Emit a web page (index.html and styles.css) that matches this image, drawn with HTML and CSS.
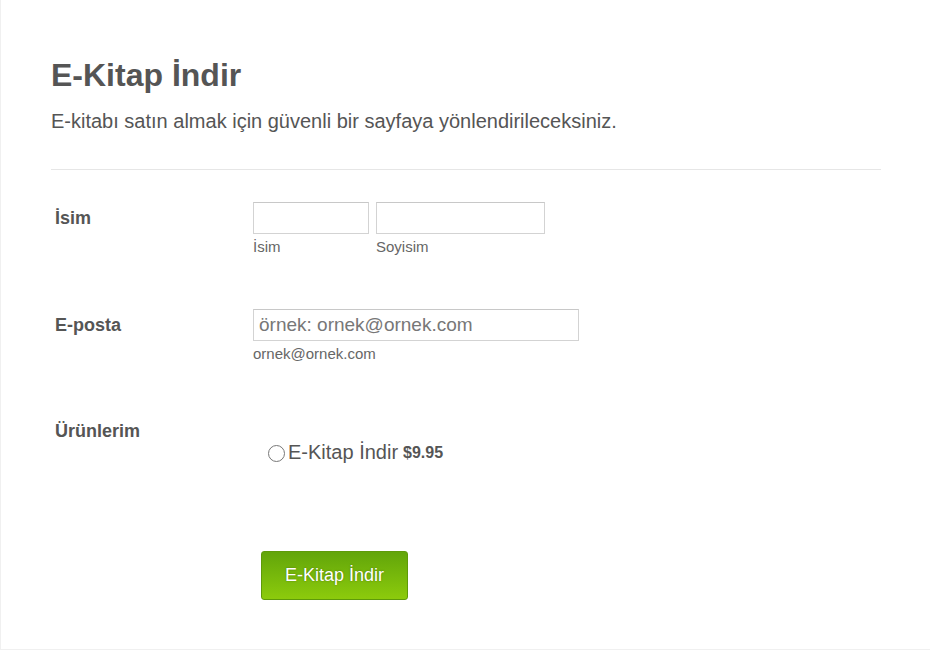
FILE: index.html
```html
<!DOCTYPE html>
<html lang="tr">
<head>
    <meta charset="UTF-8">
    <meta name="viewport" content="width=device-width, initial-scale=1.0">
    <title>E-Kitap İndir</title>
    <link rel="stylesheet" href="styles.css">
</head>
<body>
    <div class="form-wrap">
        <header class="form-header">
            <h1>E-Kitap İndir</h1>
            <p class="subtitle">E-kitabı satın almak için güvenli bir sayfaya yönlendirileceksiniz.</p>
        </header>

        <ul class="form-list">
            <li class="form-row row-name">
                <label class="form-label">İsim</label>
                <div class="form-input">
                    <div class="name-fields">
                        <span class="sub-field">
                            <input type="text" class="text-input first-name">
                            <span class="sub-label">İsim</span>
                        </span>
                        <span class="sub-field">
                            <input type="text" class="text-input last-name">
                            <span class="sub-label">Soyisim</span>
                        </span>
                    </div>
                </div>
            </li>

            <li class="form-row row-email">
                <label class="form-label">E-posta</label>
                <div class="form-input">
                    <input type="email" class="text-input email-input" placeholder="örnek: ornek@ornek.com">
                    <span class="sub-label">ornek@ornek.com</span>
                </div>
            </li>

            <li class="form-row row-products">
                <label class="form-label">Ürünlerim</label>
                <div class="form-input">
                    <label class="product-option">
                        <input type="radio" name="product" class="radio">
                        <span class="product-name">E-Kitap İndir</span>
                        <span class="product-price">$9.95</span>
                    </label>
                </div>
            </li>

            <li class="form-row row-submit">
                <div class="form-input">
                    <button type="submit" class="submit-btn">E-Kitap İndir</button>
                </div>
            </li>
        </ul>
    </div>
</body>
</html>
```

FILE: styles.css
```css
/* Genel */
body {
    margin: 0;
    font-family: "Liberation Sans", Arial, sans-serif;
    color: #555;
    background: #fff;
}

.form-wrap {
    box-sizing: border-box;
    height: 650px;
    padding: 56px 49px 0 50px;
    border-left: 1px solid #f0f0f0;
    border-bottom: 1px solid #f0f0f0;
}

/* Başlık */
.form-header {
    padding-bottom: 36px;
    border-bottom: 1px solid #e6e6e6;
}

.form-header h1 {
    margin: 0;
    font-size: 32px;
    line-height: 1.2;
    font-weight: bold;
    color: #555;
}

.subtitle {
    margin: 15px 0 0;
    font-size: 20px;
    line-height: 1.2;
    color: #555;
}

/* Form satırları */
.form-list {
    list-style: none;
    margin: 0;
    padding: 0;
}

.form-row {
    display: flex;
}

.form-label {
    width: 198px;
    flex-shrink: 0;
    padding-left: 4px;
    margin-top: 6px;
    font-size: 18px;
    line-height: 1.2;
    font-weight: bold;
    color: #555;
}

.row-name {
    margin-top: 32px;
}

.row-email {
    margin-top: 54px;
}

.row-products {
    margin-top: 53px;
}

.row-submit {
    margin-top: 87px;
    padding-left: 210px;
}

/* Alanlar */
.name-fields {
    display: flex;
    gap: 7px;
}

.sub-field {
    display: flex;
    flex-direction: column;
}

.text-input {
    box-sizing: border-box;
    height: 32px;
    border: 1px solid #d3d3d3;
    border-top-color: #c8c8c8;
    padding: 0 5px;
    font-family: inherit;
    font-size: 19px;
    color: #555;
    background: #fff;
}

.first-name {
    width: 116px;
}

.last-name {
    width: 169px;
}

.email-input {
    width: 326px;
    display: block;
}

.text-input::placeholder {
    color: #777;
}

.sub-label {
    display: block;
    margin-top: 4px;
    font-size: 15px;
    line-height: 17px;
    color: #666;
}

/* Ürün seçimi */
.product-option {
    display: flex;
    align-items: center;
    margin-top: 25px;
    padding-left: 15px;
    color: #555;
}

.radio {
    appearance: none;
    -webkit-appearance: none;
    width: 17px;
    height: 17px;
    margin: 2px 3px 0 0;
    border: 1px solid #777;
    border-radius: 50%;
    background: #fff;
}

.product-name {
    font-size: 20px;
    line-height: 24px;
}

.product-price {
    margin-left: 5px;
    margin-top: 2px;
    font-size: 16px;
    font-weight: bold;
    color: #555;
}

/* Botão de envio */
.submit-btn {
    width: 147px;
    height: 49px;
    border: 1px solid #5e9a0a;
    border-radius: 3px;
    background: linear-gradient(to bottom, #62a50a, #8ccb0c);
    color: #fff;
    font-family: inherit;
    font-size: 18px;
    text-shadow: 0 0 2px rgba(0, 0, 0, 0.35);
    cursor: pointer;
}
```
